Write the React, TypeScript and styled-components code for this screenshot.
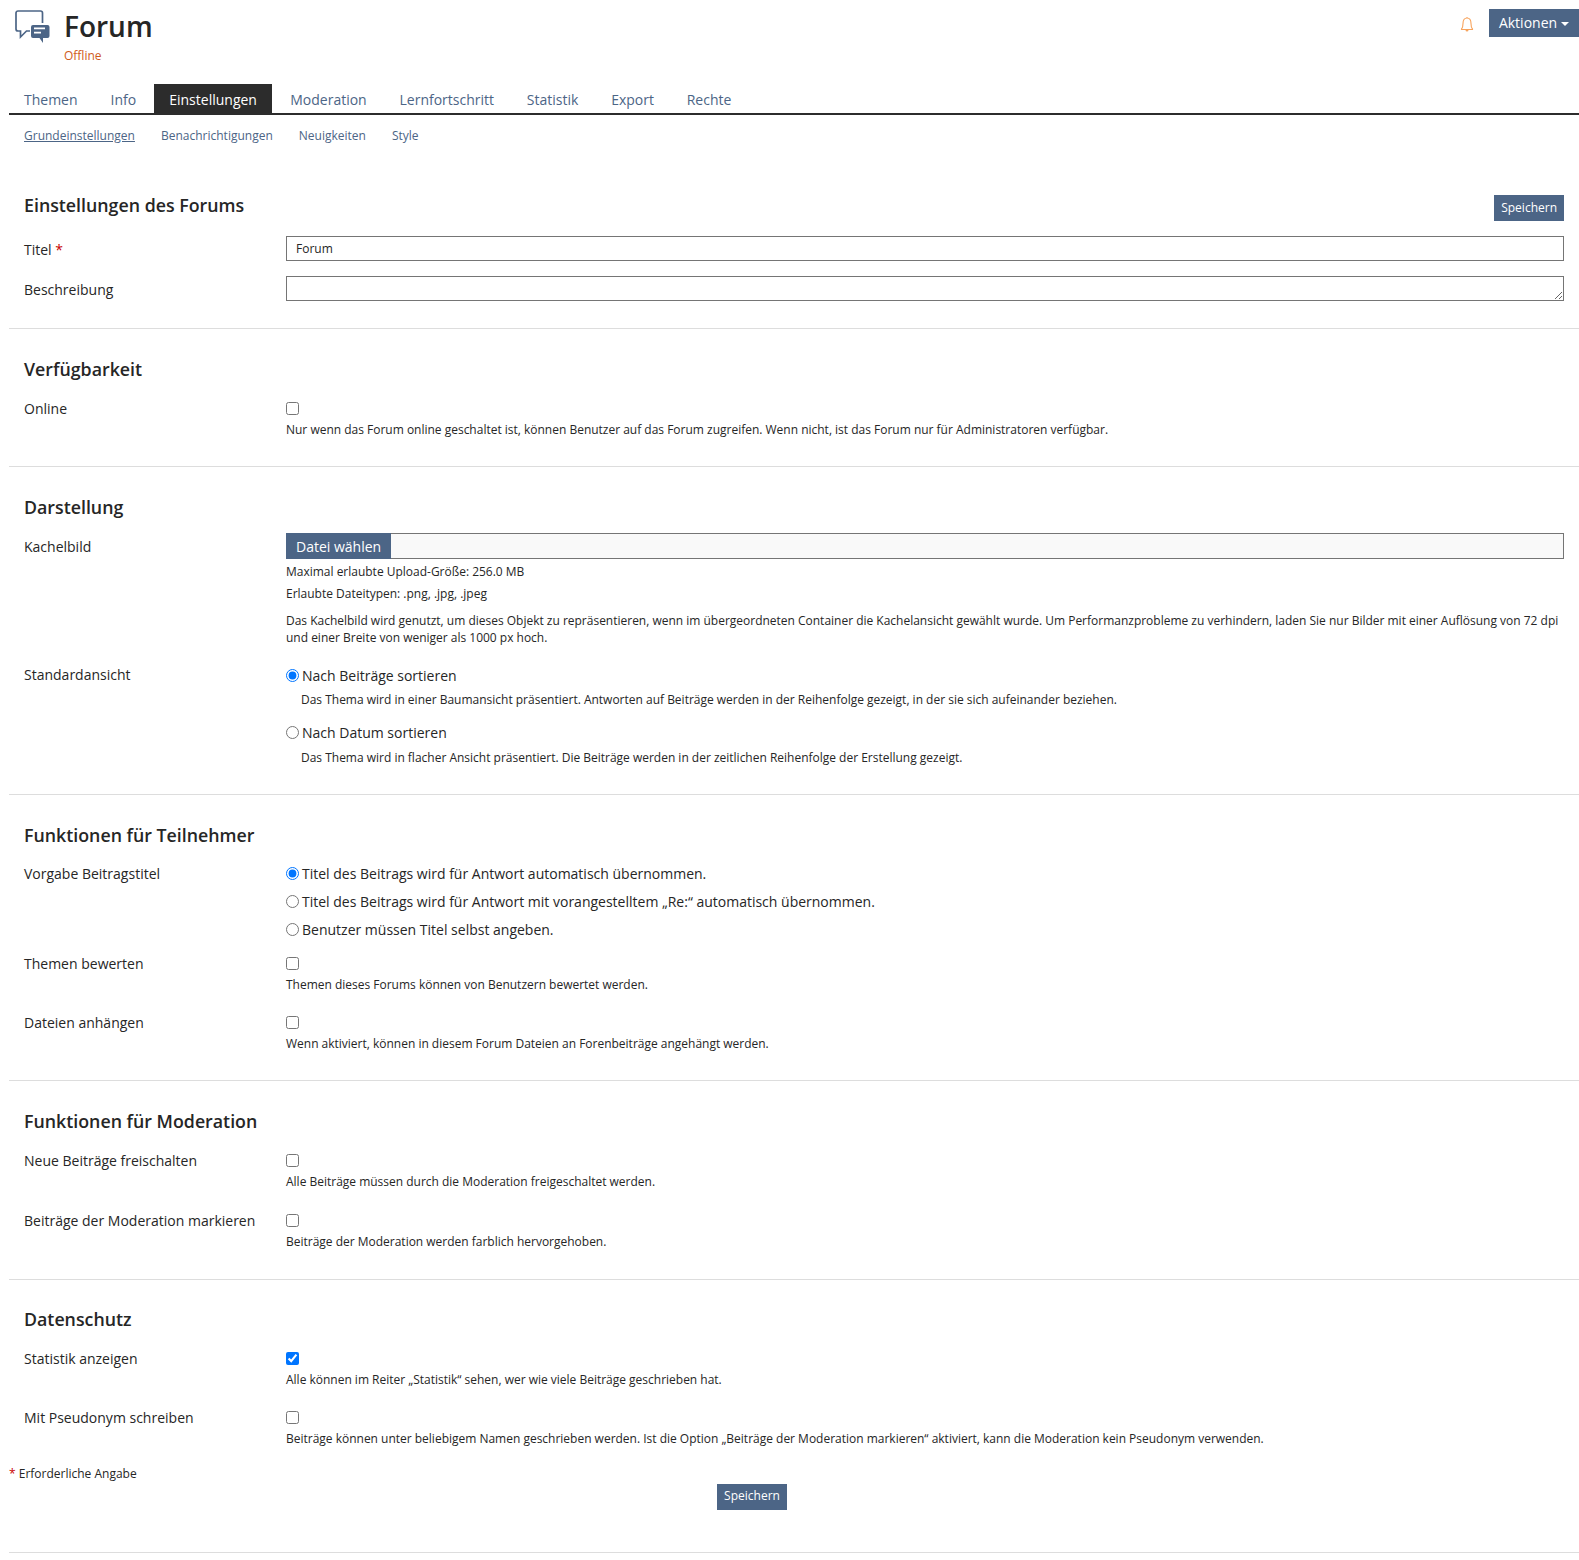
import React from 'react';
import styled, { createGlobalStyle } from 'styled-components';

const Global = createGlobalStyle`
  html, body { margin: 0; padding: 0; background: #fff; }
  body { font-family: "Open Sans", "Noto Sans", sans-serif; font-size: 14px; color: #161616; }
  * { box-sizing: border-box; }
`;

const Page = styled.div`
  padding-left: 9px;
  height: 1560px;
  overflow: hidden;
`;

const Header = styled.header`
  display: flex;
  justify-content: space-between;
  height: 84px;
`;

const TitleWrap = styled.div`
  display: flex;
  padding: 8px 0 0 6px;
`;

const IconBox = styled.div`
  width: 35px;
  height: 36px;
  margin: 2px 14px 0 0;
`;

const TitleText = styled.div`
  display: flex;
  flex-direction: column;
`;

const Title = styled.h1`
  margin: 0;
  font-size: 28px;
  line-height: 37px;
  font-weight: 600;
  color: #262626;
`;

const Alert = styled.div`
  margin-top: 3px;
  font-size: 12px;
  line-height: 16px;
  color: #d05b1c;
`;

const Actions = styled.div`
  display: flex;
  align-items: flex-start;
  padding-top: 9px;
`;

const Bell = styled.div`
  width: 14px;
  height: 18px;
  margin: 6px 15px 0 0;
`;

const ActionButton = styled.button`
  height: 28px;
  width: 90px;
  border: 0;
  padding: 0 0 2px;
  background: #4c6586;
  color: #fff;
  font: 14px "Open Sans", sans-serif;
`;

const Caret = styled.span`
  display: inline-block;
  margin-left: 4px;
  vertical-align: middle;
  border-top: 4px solid #fff;
  border-left: 4px solid transparent;
  border-right: 4px solid transparent;
`;

const TabBar = styled.nav`
  display: flex;
  height: 31px;
  border-bottom: 2px solid #2c2c2c;
`;

const Tab = styled.a<{ $active?: boolean }>`
  padding: 0 ${(p) => (p.$active ? '15.5px' : '16.4px')};
  line-height: 32px;
  height: 29px;
  font-size: 14px;
  color: ${(p) => (p.$active ? '#fff' : '#4c6586')};
  background: ${(p) => (p.$active ? '#2c2c2c' : 'transparent')};
  &:first-child { padding: 0 17px 0 15px; }
  &:nth-child(2) { padding: 0 17.500px 0 16px; }
  &:nth-child(4) { padding-left: 17.800px; }
`;

const SubTabs = styled.div`
  display: flex;
  gap: 26px;
  padding: 13px 0 0 15px;
  height: 75px;
`;

const SubTab = styled.a<{ $active?: boolean }>`
  font-size: 12px;
  line-height: 16px;
  height: 16px;
  color: #4c6586;
  text-decoration: ${(p) => (p.$active ? 'underline' : 'none')};
`;

const Section = styled.section<{ $last?: boolean; $after?: number }>`
  padding: 0 15px ${(p) => (p.$last ? '1px' : '11px')};
  border-bottom: ${(p) => (p.$last ? '0' : '1px solid #dddddd')};
  margin-bottom: ${(p) => (p.$last ? 0 : p.$after ?? 25)}px;
`;

const SectionHead = styled.div<{ $gap?: number }>`
  display: flex;
  justify-content: space-between;
  align-items: flex-start;
  min-height: 30px;
  margin-bottom: ${(p) => p.$gap ?? 11}px;
`;

const SectionTitle = styled.h2`
  margin: 0;
  font-size: 17.800px;
  line-height: 30px;
  font-weight: 600;
  color: #262626;
`;

const SaveButton = styled.button`
  height: 26px;
  padding: 0 7px 2px;
  border: 0;
  background: #4c6586;
  color: #fff;
  font: 12px "Open Sans", sans-serif;
`;

const HeadSave = styled(SaveButton)`
  margin: 5px 0 4px;
`;

const Row = styled.div<{ $pad?: number }>`
  display: grid;
  grid-template-columns: 262px 1fr;
  padding-bottom: ${(p) => p.$pad ?? 17}px;
`;

const Label = styled.label`
  font-size: 14px;
  line-height: 20px;
  padding-top: 4px;
  color: #262626;
`;

const Required = styled.span`
  color: #c80000;
`;

const Field = styled.div`
  min-width: 0;
`;

const TextInput = styled.div`
  height: 25px;
  border: 1px solid #757575;
  padding: 0 9px;
  font-size: 12px;
  line-height: 23px;
  color: #262626;
`;

const TextArea = styled.textarea`
  display: block;
  width: 100%;
  height: 25px;
  border: 1px solid #757575;
  border-radius: 0;
  padding: 0;
  margin: 0;
  outline: none;
`;

const Check = styled.input.attrs({ type: 'checkbox', readOnly: true })`
  display: block;
  width: 13px;
  height: 13px;
  margin: 7px 0 0;
  accent-color: #0075ff;
`;

const Hint = styled.div<{ $gap?: number }>`
  font-size: 11.990px;
  line-height: 17px;
  margin-top: ${(p) => p.$gap ?? 6}px;
  color: #262626;
`;

const FileBox = styled.div`
  display: flex;
  height: 26px;
  border: 1px solid #757575;
  background: #f9f9f9;
`;

const FileButton = styled.div`
  margin: -1px 0 -1px -1px;
  padding: 0 10px;
  height: 26px;
  background: #4c6586;
  color: #fff;
  line-height: 28px;
  font-size: 14px;
`;

const RadioLine = styled.label`
  display: flex;
  align-items: center;
  height: 28px;
  font-size: 14px;
  color: #262626;
`;

const Radio = styled.input.attrs({ type: 'radio', readOnly: true })`
  width: 13px;
  height: 13px;
  margin: 0 3px 0 0;
  accent-color: #0075ff;
`;

const RadioHint = styled.div`
  font-size: 11.990px;
  line-height: 17px;
  margin: 2px 0 0 15px;
  padding-bottom: 10.500px;
  color: #262626;
  &:last-child { padding-bottom: 0; }
`;

const Footer = styled.div`
  height: 88px;
  border-bottom: 1px solid #dddddd;
  font-size: 12px;
  line-height: 17px;
  color: #262626;
`;

const ButtonCenter = styled.div`
  display: flex;
  justify-content: center;
  padding: 2px 84px 0 0;
`;

const ForumIcon = () => (
  <svg viewBox="0 0 35 36" width="35" height="36">
    <path d="M27.500 13V3a2 2 0 0 0-2-2H3a2 2 0 0 0-2 2v16a2 2 0 0 0 2 2h2.500v6l6-6H15" fill="none" stroke="#4c6586" strokeWidth="1.700" />
    <path d="M18 15h14.500a2 2 0 0 1 2 2v9a2 2 0 0 1-2 2H28v5l-3.500-5H18a2 2 0 0 1-2-2v-9a2 2 0 0 1 2-2z" fill="#4c6586" />
    <path d="M19 17.500h11v1.700H19zM19 21.800h7v1.700h-7z" fill="#fff" />
  </svg>
);

const BellIcon = () => (
  <svg viewBox="0 0 14 18" width="14" height="18">
    <path d="M1.500 14c1.200-1.200 1.500-3 1.500-5.500C3 5 4.600 3 7 3s4 2 4 5.500c0 2.500.3 4.300 1.500 5.500v.5h-11zM7 3V2" fill="none" stroke="#f7a35c" strokeWidth="1.100" />
    <path d="M5.500 15h3a1.500 1.500 0 0 1-3 0z" fill="#f7a35c" />
  </svg>
);

export default function App() {
  return (
    <Page>
      <Global />
      <Header>
        <TitleWrap>
          <IconBox><ForumIcon /></IconBox>
          <TitleText>
            <Title>Forum</Title>
            <Alert>Offline</Alert>
          </TitleText>
        </TitleWrap>
        <Actions>
          <Bell><BellIcon /></Bell>
          <ActionButton>Aktionen<Caret /></ActionButton>
        </Actions>
      </Header>

      <TabBar>
        <Tab>Themen</Tab>
        <Tab>Info</Tab>
        <Tab $active>Einstellungen</Tab>
        <Tab>Moderation</Tab>
        <Tab>Lernfortschritt</Tab>
        <Tab>Statistik</Tab>
        <Tab>Export</Tab>
        <Tab>Rechte</Tab>
      </TabBar>
      <SubTabs>
        <SubTab $active>Grundeinstellungen</SubTab>
        <SubTab>Benachrichtigungen</SubTab>
        <SubTab>Neuigkeiten</SubTab>
        <SubTab>Style</SubTab>
      </SubTabs>

      <Section>
        <SectionHead>
          <SectionTitle>Einstellungen des Forums</SectionTitle>
          <HeadSave>Speichern</HeadSave>
        </SectionHead>
        <Row $pad={15}>
          <Label>Titel <Required>*</Required></Label>
          <Field><TextInput>Forum</TextInput></Field>
        </Row>
        <Row $pad={16}>
          <Label>Beschreibung</Label>
          <Field><TextArea readOnly /></Field>
        </Row>
      </Section>

      <Section>
        <SectionHead><SectionTitle>Verfügbarkeit</SectionTitle></SectionHead>
        <Row>
          <Label>Online</Label>
          <Field>
            <Check />
            <Hint>Nur wenn das Forum online geschaltet ist, können Benutzer auf das Forum zugreifen. Wenn nicht, ist das Forum nur für Administratoren verfügbar.</Hint>
          </Field>
        </Row>
      </Section>

      <Section>
        <SectionHead><SectionTitle>Darstellung</SectionTitle></SectionHead>
        <Row $pad={15}>
          <Label>Kachelbild</Label>
          <Field>
            <FileBox><FileButton>Datei wählen</FileButton></FileBox>
            <Hint $gap={4}>Maximal erlaubte Upload-Größe: 256.0 MB</Hint>
            <Hint $gap={5}>Erlaubte Dateitypen: .png, .jpg, .jpeg</Hint>
            <Hint $gap={10}>Das Kachelbild wird genutzt, um dieses Objekt zu repräsentieren, wenn im übergeordneten Container die Kachelansicht gewählt wurde. Um Performanzprobleme zu verhindern, laden Sie nur Bilder mit einer Auflösung von 72 dpi und einer Breite von weniger als 1000 px hoch.</Hint>
          </Field>
        </Row>
        <Row>
          <Label>Standardansicht</Label>
          <Field>
            <RadioLine><Radio checked name="view" />Nach Beiträge sortieren</RadioLine>
            <RadioHint>Das Thema wird in einer Baumansicht präsentiert. Antworten auf Beiträge werden in der Reihenfolge gezeigt, in der sie sich aufeinander beziehen.</RadioHint>
            <RadioLine><Radio name="view" />Nach Datum sortieren</RadioLine>
            <RadioHint>Das Thema wird in flacher Ansicht präsentiert. Die Beiträge werden in der zeitlichen Reihenfolge der Erstellung gezeigt.</RadioHint>
          </Field>
        </Row>
      </Section>

      <Section>
        <SectionHead $gap={10}><SectionTitle>Funktionen für Teilnehmer</SectionTitle></SectionHead>
        <Row $pad={6}>
          <Label>Vorgabe Beitragstitel</Label>
          <Field>
            <RadioLine><Radio checked name="title" />Titel des Beitrags wird für Antwort automatisch übernommen.</RadioLine>
            <RadioLine><Radio name="title" />Titel des Beitrags wird für Antwort mit vorangestelltem „Re:“ automatisch übernommen.</RadioLine>
            <RadioLine><Radio name="title" />Benutzer müssen Titel selbst angeben.</RadioLine>
          </Field>
        </Row>
        <Row $pad={16}>
          <Label>Themen bewerten</Label>
          <Field>
            <Check />
            <Hint>Themen dieses Forums können von Benutzern bewertet werden.</Hint>
          </Field>
        </Row>
        <Row>
          <Label>Dateien anhängen</Label>
          <Field>
            <Check />
            <Hint>Wenn aktiviert, können in diesem Forum Dateien an Forenbeiträge angehängt werden.</Hint>
          </Field>
        </Row>
      </Section>

      <Section $after={24}>
        <SectionHead><SectionTitle>Funktionen für Moderation</SectionTitle></SectionHead>
        <Row>
          <Label>Neue Beiträge freischalten</Label>
          <Field>
            <Check />
            <Hint>Alle Beiträge müssen durch die Moderation freigeschaltet werden.</Hint>
          </Field>
        </Row>
        <Row $pad={18}>
          <Label>Beiträge der Moderation markieren</Label>
          <Field>
            <Check />
            <Hint>Beiträge der Moderation werden farblich hervorgehoben.</Hint>
          </Field>
        </Row>
      </Section>

      <Section $last>
        <SectionHead><SectionTitle>Datenschutz</SectionTitle></SectionHead>
        <Row $pad={16}>
          <Label>Statistik anzeigen</Label>
          <Field>
            <Check checked />
            <Hint>Alle können im Reiter „Statistik“ sehen, wer wie viele Beiträge geschrieben hat.</Hint>
          </Field>
        </Row>
        <Row>
          <Label>Mit Pseudonym schreiben</Label>
          <Field>
            <Check />
            <Hint>Beiträge können unter beliebigem Namen geschrieben werden. Ist die Option „Beiträge der Moderation markieren“ aktiviert, kann die Moderation kein Pseudonym verwenden.</Hint>
          </Field>
        </Row>
      </Section>

      <Footer>
        <div><Required>*</Required> Erforderliche Angabe</div>
        <ButtonCenter><SaveButton>Speichern</SaveButton></ButtonCenter>
      </Footer>
    </Page>
  );
}
